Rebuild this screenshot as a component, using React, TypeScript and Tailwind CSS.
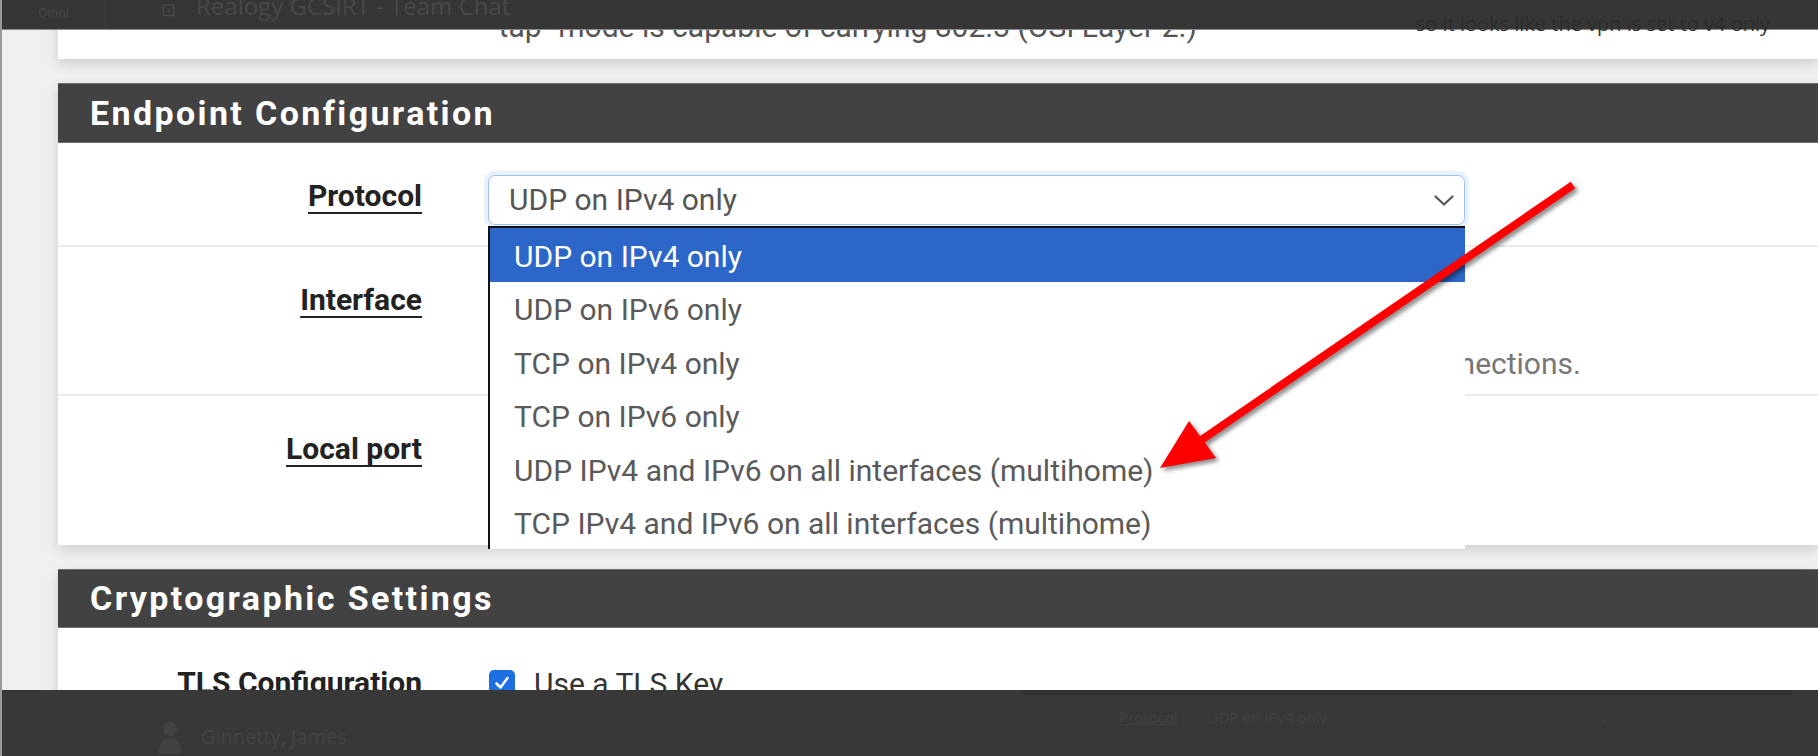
import React from "react";

const options = [
  "UDP on IPv4 only",
  "UDP on IPv6 only",
  "TCP on IPv4 only",
  "TCP on IPv6 only",
  "UDP IPv4 and IPv6 on all interfaces (multihome)",
  "TCP IPv4 and IPv6 on all interfaces (multihome)",
];

const FieldLabel = ({ children, underline = true }: { children: React.ReactNode; underline?: boolean }) => (
  <div className="w-[364px] shrink-0 text-right">
    <span
      className={
        underline
          ? "text-[30px] font-bold leading-[42px] text-[#222] underline decoration-2 underline-offset-[6px]"
          : "text-[30px] font-bold leading-[42px] text-[#222]"
      }
    >
      {children}
    </span>
  </div>
);

const PanelHeader = ({ title, tall = true }: { title: string; tall?: boolean }) => (
  <div
    className={
      tall
        ? "flex h-[60px] items-center border-y border-[#6e6e6e] bg-[#424242] pl-[32px]"
        : "flex h-[59px] items-center border-y border-[#6e6e6e] bg-[#424242] pl-[32px]"
    }
  >
    <h2 className="text-[34px] font-bold tracking-[0.07em] text-white">{title}</h2>
  </div>
);

const Chevron = () => (
  <svg width="20" height="11" viewBox="0 0 20 11" fill="none">
    <polyline points="1.5,1.5 10,9.5 18.5,1.5" stroke="#555" strokeWidth="2.2" strokeLinecap="round" strokeLinejoin="round" />
  </svg>
);

const SelectBox = ({ value, focused = false }: { value: string; focused?: boolean }) => (
  <div
    className={
      focused
        ? "flex h-[50px] items-center justify-between rounded-[7px] border border-[#9cc2ee] bg-white pl-[20px] pr-[10px] shadow-[0_0_0_4px_rgba(120,170,235,0.18)]"
        : "flex h-[50px] items-center justify-between rounded-[7px] border border-[#cfcfcf] bg-white pl-[20px] pr-[10px]"
    }
  >
    <span className="text-[30px] leading-[40px] text-[#555]">{value}</span>
    <Chevron />
  </div>
);

const ProtocolDropdown = () => (
  <div className="absolute left-0 top-[51px] z-20 w-full border-l-2 border-t-2 border-[#111] bg-white">
    {options.map((opt, i) => (
      <div
        key={opt}
        className={
          i === 0
            ? "flex h-[53.5px] items-center bg-[#2d66c9] pl-[24px] pt-[3px] text-[30px] text-white"
            : "flex h-[53.5px] items-center pl-[24px] pt-[3px] text-[30px] text-[#5a5a5a]"
        }
      >
        {opt}
      </div>
    ))}
  </div>
);

const RedArrow = () => (
  <svg
    className="pointer-events-none absolute left-0 top-0 z-25"
    width="1818"
    height="756"
    viewBox="0 0 1818 756"
    style={{ filter: "drop-shadow(3px 3px 2px rgba(0,0,0,0.45))" }}
  >
    <line x1="1571" y1="185" x2="1192" y2="445" stroke="#ff0000" strokeWidth="8" />
    <polygon points="1158,468 1187,421 1214,458" fill="#ff0000" />
  </svg>
);

export default function App() {
  return (
    <div className="relative h-[756px] w-[1818px] overflow-hidden border-l-2 border-[#9a9a9a] bg-[#f0f0f0] font-['Roboto','Liberation_Sans',sans-serif]">
      <div className="flex flex-col gap-[24px] pl-[56px]">
        {/* tail of the previous panel */}
        <div className="h-[59px] bg-white pl-[431px] pt-[10px] shadow-[0_5px_12px_rgba(0,0,0,0.14)]">
          <p className="text-[30px] leading-[34px] text-[#555]">"tap" mode is capable of carrying 802.3 (OSI Layer 2.)</p>
        </div>

        <div className="bg-white shadow-[0_5px_12px_rgba(0,0,0,0.14)]">
          <PanelHeader title="Endpoint Configuration" />

          <div className="flex h-[104px] border-b-2 border-[#ececec] pt-[32px]">
            <FieldLabel>Protocol</FieldLabel>
            <div className="relative ml-[66px] w-[977px]">
              <SelectBox value="UDP on IPv4 only" focused />
              <ProtocolDropdown />
            </div>
          </div>

          <div className="flex h-[149px] border-b-2 border-[#ececec] pt-[32px]">
            <FieldLabel>Interface</FieldLabel>
            <div className="ml-[66px] w-[1200px]">
              <div className="w-[977px]">
                <SelectBox value="WAN" />
              </div>
              <p className="mt-[16px] whitespace-nowrap text-[30px] leading-[38px] text-[#777]">
                The interface or Virtual IP address where OpenVPN will receive client connections.
              </p>
            </div>
          </div>

          <div className="flex h-[149px] pt-[32px]">
            <FieldLabel>Local port</FieldLabel>
            <div className="ml-[66px] w-[977px]">
              <div className="h-[50px] rounded-[7px] border border-[#cfcfcf] bg-white pl-[20px] text-[30px] leading-[48px] text-[#555]">
                1194
              </div>
            </div>
          </div>
        </div>

        <div className="bg-white shadow-[0_5px_12px_rgba(0,0,0,0.14)]">
          <PanelHeader title="Cryptographic Settings" tall={false} />
          <div className="flex h-[120px] pt-[34px]">
            <FieldLabel underline={false}>TLS Configuration</FieldLabel>
            <div className="ml-[67px] flex h-[42px] items-center gap-[19px]">
              <span className="flex h-[26px] w-[26px] items-center justify-center rounded-[5px] bg-[#1b6fe3]">
                <svg width="18" height="18" viewBox="0 0 18 18" fill="none">
                  <polyline points="3.5,9.5 7.5,13.5 14.5,4" stroke="#fff" strokeWidth="2.6" strokeLinecap="round" strokeLinejoin="round" />
                </svg>
              </span>
              <span className="text-[30px] text-[#333]">Use a TLS Key</span>
            </div>
          </div>
        </div>
      </div>

      <RedArrow />

      {/* overlapping chat window, top edge */}
      <div className="absolute left-0 top-0 z-30 flex h-[30px] w-full items-start border-b border-[#8a8a8a] bg-[#363636] font-['Open_Sans','Noto_Sans',sans-serif]">
        <span className="ml-[36px] mt-[6px] w-[66px] text-[12px] leading-[14px] text-[#474747]">Omni</span>
        <div className="h-full w-px bg-[#3c3c3c]" />
        <span className="ml-[56px] mt-[-4px] text-[18px] text-[#4a4a4a]">⊡</span>
        <span className="ml-[20px] mt-[-9px] text-[24px] leading-[30px] text-[#484848]">Realogy GCSIRT - Team Chat</span>
        <span className="ml-auto mr-[48px] mt-[11px] text-[20px] leading-[26px] text-[#2d2d2d]">so it looks like the vpn is set to v4 only</span>
      </div>

      {/* overlapping chat window, bottom edge */}
      <div className="absolute bottom-0 left-0 z-30 h-[66px] w-full bg-[#383838] font-['Open_Sans','Noto_Sans',sans-serif]">
        <div className="absolute left-[1020px] top-0 h-[5px] w-[770px] bg-[#333]" />
        <div className="flex items-center pl-[155px] pt-[30px]">
          <svg width="26" height="34" viewBox="0 0 26 34" fill="#424242">
            <circle cx="13" cy="9" r="7" />
            <path d="M2 34 C2 22 6 18 13 18 C20 18 24 22 24 34 Z" />
          </svg>
          <span className="ml-[18px] text-[20px] text-[#434343]">Ginnetty, James</span>
        </div>
        <div className="absolute left-[1117px] top-[16px] flex items-center gap-[30px] text-[15px] text-[#404040]">
          <span className="underline">Protocol</span>
          <span className="w-[360px]">UDP on IPv4 only</span>
          <span>⌄</span>
        </div>
      </div>
    </div>
  );
}
